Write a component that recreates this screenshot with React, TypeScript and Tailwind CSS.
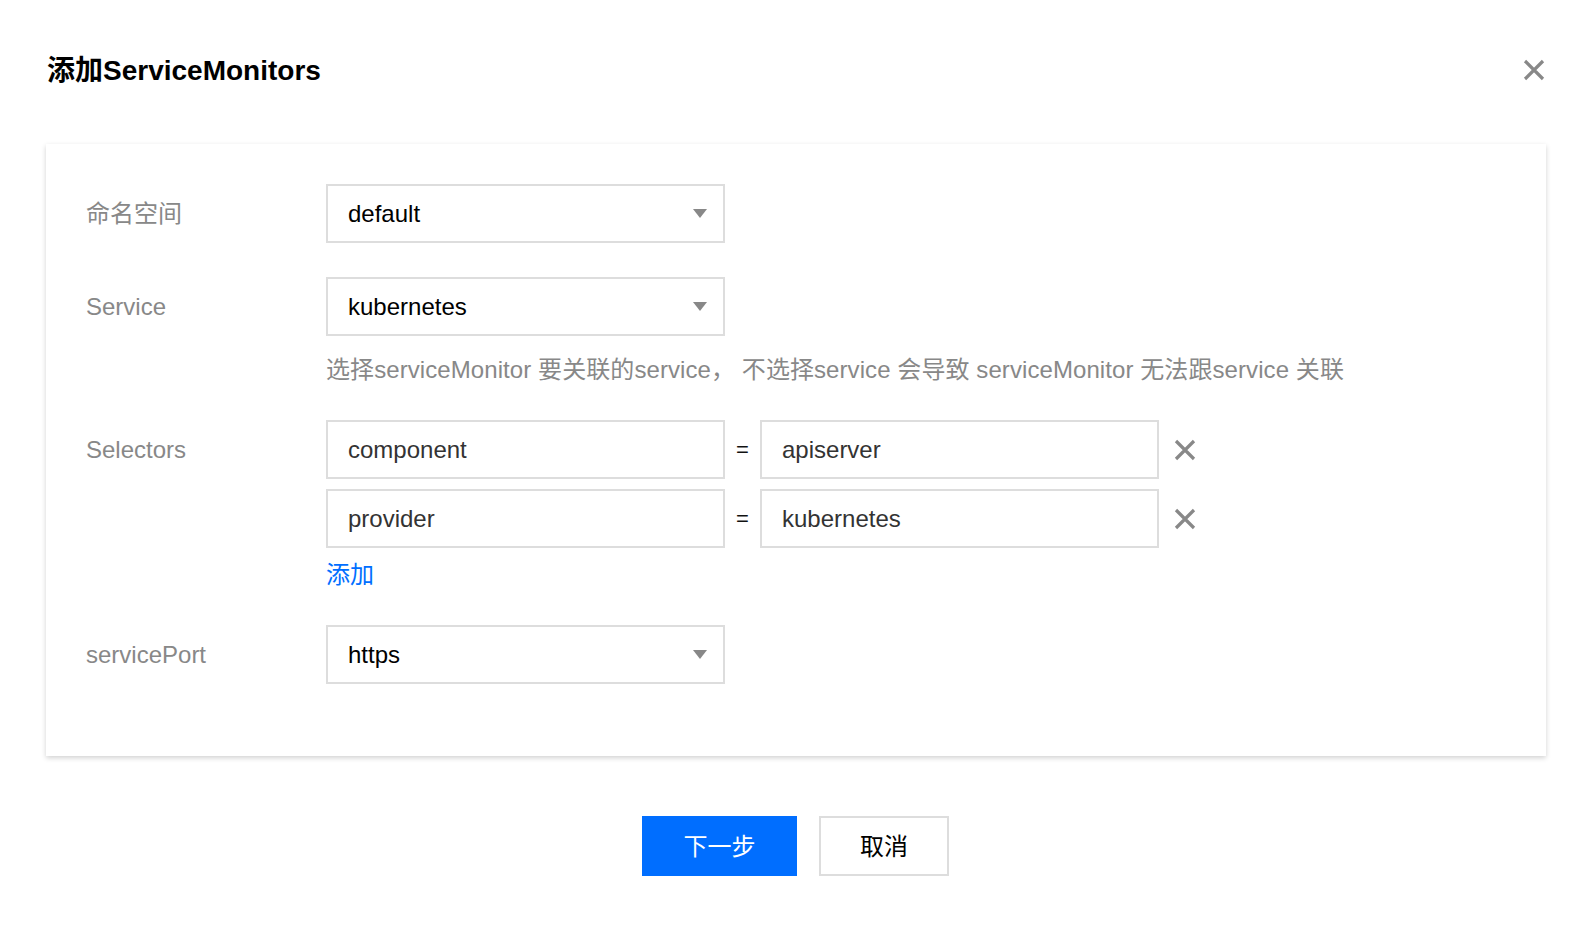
import React from "react";

const FONT = '"Liberation Sans", "Noto Sans CJK SC", sans-serif';

function Cross({ size = 22 }: { size?: number }) {
  return (
    <svg width={size} height={size} viewBox="0 0 22 22" fill="none">
      <path d="M2 2 L20 20 M20 2 L2 20" stroke="#888888" strokeWidth="3.2" strokeLinecap="butt" />
    </svg>
  );
}

function Select({ value }: { value: string }) {
  return (
    <div className="flex h-[59px] w-[399px] items-center justify-between border-2 border-[#dddddd] bg-white pl-[20px] pr-[16px]">
      <span className="text-[24px] text-black">{value}</span>
      <svg width="14" height="9" viewBox="0 0 14 9">
        <path d="M0 0 L14 0 L7 9 Z" fill="#888888" />
      </svg>
    </div>
  );
}

function Input({ value }: { value: string }) {
  return (
    <div className="flex h-[59px] w-[399px] items-center border-2 border-[#dddddd] bg-white pl-[20px]">
      <span className="text-[24px] text-[#333333]">{value}</span>
    </div>
  );
}

function Label({ children }: { children: React.ReactNode }) {
  return (
    <div className="flex h-[59px] w-[240px] shrink-0 items-center text-[24px] text-[#888888]">{children}</div>
  );
}

function SelectorRow({ k, v }: { k: string; v: string }) {
  return (
    <div className="flex items-center">
      <Input value={k} />
      <div className="flex w-[35px] justify-center text-[22px] text-[#111111]">=</div>
      <Input value={v} />
      <div className="ml-[15px] flex items-center">
        <Cross />
      </div>
    </div>
  );
}

export default function App() {
  return (
    <div className="h-[926px] w-[1596px] bg-white" style={{ fontFamily: FONT }}>
      <div className="flex h-[144px] items-start justify-between pl-[47px] pr-[51px] pt-[53px]">
        <h1 className="text-[28px] font-bold leading-[36px] text-black">添加ServiceMonitors</h1>
        <div className="mt-[6px]">
          <Cross />
        </div>
      </div>
      <div className="ml-[46px] mr-[50px] flex h-[612px] flex-col bg-white pl-[40px] pt-[40px] shadow-[0_2px_5px_rgba(0,0,0,0.18)]">
        <div className="flex">
          <Label>命名空间</Label>
          <Select value="default" />
        </div>
        <div className="mt-[34px] flex">
          <Label>Service</Label>
          <div className="flex flex-col">
            <Select value="kubernetes" />
            <div className="mt-[18px] whitespace-nowrap text-[24px] leading-[32px] tracking-[0.08px] text-[#888888]">
              选择serviceMonitor 要关联的service， 不选择service 会导致 serviceMonitor 无法跟service 关联
            </div>
          </div>
        </div>
        <div className="mt-[34px] flex">
          <Label>Selectors</Label>
          <div className="flex flex-col">
            <SelectorRow k="component" v="apiserver" />
            <div className="mt-[10px]">
              <SelectorRow k="provider" v="kubernetes" />
            </div>
            <div className="mt-[11px] text-[24px] leading-[32px] text-[#006eff]">添加</div>
          </div>
        </div>
        <div className="mt-[34px] flex">
          <Label>servicePort</Label>
          <Select value="https" />
        </div>
      </div>
      <div className="mt-[60px] flex justify-center gap-[22px] pr-[5px]">
        <button className="flex h-[60px] w-[155px] items-center justify-center bg-[#006eff] pt-[2px] text-[24px] text-white">
          下一步
        </button>
        <button className="flex h-[60px] w-[130px] items-center justify-center border-2 border-[#dddddd] bg-white pt-[2px] text-[24px] text-black">
          取消
        </button>
      </div>
    </div>
  );
}
